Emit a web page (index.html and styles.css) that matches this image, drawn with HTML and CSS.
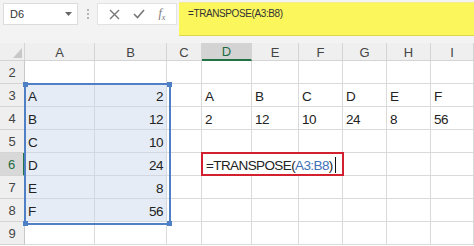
FILE: index.html
```html
<!DOCTYPE html>
<html lang="en">
<head>
    <meta charset="UTF-8">
    <title>TRANSPOSE</title>
    <link rel="stylesheet" href="styles.css">
</head>
<body>

    <!-- barra de formula -->
    <div class="toolbar">
        <div class="namebox">
            <span>D6</span>
            <svg class="caret" width="7" height="4" viewBox="0 0 7 4"><path d="M0 0h7L3.5 4z" fill="#666"/></svg>
        </div>
        <div class="grip"><i></i><i></i><i></i></div>
        <div class="buttons">
            <svg width="11" height="11" viewBox="0 0 11 11"><path d="M1 1l9 9M10 1l-9 9" stroke="#777" stroke-width="1.4"/></svg>
            <svg width="12" height="10" viewBox="0 0 12 10"><path d="M1 5l3.5 3.5L11 1" stroke="#777" stroke-width="1.6" fill="none"/></svg>
            <span class="fx">f<sub>x</sub></span>
        </div>
        <div class="formula">=TRANSPOSE(A3:B8)</div>
    </div>

    <!-- hoja -->
    <div class="sheet">
        <div class="corner"><svg width="9" height="10" viewBox="0 0 9 10"><path d="M9 0v10H0z" fill="#c8c8c8"/></svg></div>
        <div class="colhead">A</div>
        <div class="colhead">B</div>
        <div class="colhead">C</div>
        <div class="colhead active">D</div>
        <div class="colhead">E</div>
        <div class="colhead">F</div>
        <div class="colhead">G</div>
        <div class="colhead">H</div>
        <div class="colhead">I</div>

        <div class="rowhead">2</div>
        <div class="cell"></div><div class="cell"></div><div class="cell"></div><div class="cell"></div><div class="cell"></div><div class="cell"></div><div class="cell"></div><div class="cell"></div><div class="cell"></div>

        <div class="rowhead">3</div>
        <div class="cell sel">A</div><div class="cell sel num">2</div><div class="cell"></div>
        <div class="cell">A</div><div class="cell">B</div><div class="cell">C</div><div class="cell">D</div><div class="cell">E</div><div class="cell">F</div>

        <div class="rowhead">4</div>
        <div class="cell sel">B</div><div class="cell sel num">12</div><div class="cell"></div>
        <div class="cell">2</div><div class="cell">12</div><div class="cell">10</div><div class="cell">24</div><div class="cell">8</div><div class="cell">56</div>

        <div class="rowhead">5</div>
        <div class="cell sel">C</div><div class="cell sel num">10</div><div class="cell"></div>
        <div class="cell"></div><div class="cell"></div><div class="cell"></div><div class="cell"></div><div class="cell"></div><div class="cell"></div>

        <div class="rowhead active">6</div>
        <div class="cell sel">D</div><div class="cell sel num">24</div><div class="cell"></div>
        <div class="cell"></div><div class="cell"></div><div class="cell"></div><div class="cell"></div><div class="cell"></div><div class="cell"></div>

        <div class="rowhead">7</div>
        <div class="cell sel">E</div><div class="cell sel num">8</div><div class="cell"></div>
        <div class="cell"></div><div class="cell"></div><div class="cell"></div><div class="cell"></div><div class="cell"></div><div class="cell"></div>

        <div class="rowhead">8</div>
        <div class="cell sel">F</div><div class="cell sel num">56</div><div class="cell"></div>
        <div class="cell"></div><div class="cell"></div><div class="cell"></div><div class="cell"></div><div class="cell"></div><div class="cell"></div>

        <div class="rowhead">9</div>
        <div class="cell"></div><div class="cell"></div><div class="cell"></div><div class="cell"></div><div class="cell"></div><div class="cell"></div><div class="cell"></div><div class="cell"></div><div class="cell"></div>

        <!-- rango A3:B8 -->
        <div class="range">
            <b class="h tl"></b><b class="h tr"></b><b class="h bl"></b><b class="h br"></b>
        </div>

        <!-- celda en edicion -->
        <div class="editor">=TRANSPOSE(<span class="ref">A3:B8</span>)<span class="cursor"></span></div>
    </div>

</body>
</html>
```

FILE: styles.css
```css
body {
    margin: 0;
    width: 474px;
    height: 246px;
    overflow: hidden;
    background-color: #fff;
    font-family: "Liberation Sans", Arial, sans-serif;
}

.toolbar {
    display: flex;
    align-items: flex-start;
    height: 43px;
    background-color: #f3f3f3;
}

.namebox {
    display: flex;
    align-items: center;
    justify-content: space-between;
    box-sizing: border-box;
    width: 75px;
    height: 22px;
    margin: 3px 0 0 3px;
    padding: 0 5px 0 6px;
    background-color: #fff;
    border: 1px solid #dcdcdc;
    font-size: 11px;
    color: #333;
}

.grip {
    display: flex;
    flex-direction: column;
    gap: 2px;
    margin: 9px 8px 0 9px;
}

.grip i {
    display: block;
    width: 2px;
    height: 2px;
    background-color: #b5b5b5;
}

.buttons {
    display: flex;
    align-items: center;
    justify-content: space-around;
    box-sizing: border-box;
    width: 80px;
    height: 22px;
    margin-top: 3px;
    padding: 0 4px;
    background-color: #fff;
    border: 1px solid #e2e2e2;
}

.fx {
    font-family: "Liberation Serif", serif;
    font-style: italic;
    font-size: 12px;
    color: #777;
}

.fx sub {
    font-size: 8px;
}

.formula {
    flex: 1;
    box-sizing: border-box;
    height: 34px;
    margin: 2px 0 0 2px;
    padding: 5px 0 0 9px;
    background-color: #fbf65c;
    border-top: 1px solid #f3ee8a;
    border-bottom: 1px solid #dcd84a;
    font-size: 10px;
    letter-spacing: -0.4px;
    color: #333;
}

.sheet {
    position: relative;
    display: grid;
    grid-template-columns: 25px 70px 72px 35px 50px 47px 44px 44px 44px 43px;
    grid-template-rows: 18px repeat(8, 23px);
    font-size: 13.5px;
    letter-spacing: -0.5px;
    color: #222;
}

.corner,
.colhead,
.rowhead {
    display: flex;
    align-items: center;
    justify-content: center;
    box-sizing: border-box;
    background-color: #efefef;
    color: #444;
    letter-spacing: 0;
    border-right: 1px solid #d4d4d4;
    border-bottom: 1px solid #d4d4d4;
}

.corner {
    justify-content: flex-end;
    align-items: flex-end;
    padding: 0 2px 2px 0;
}

.colhead {
    font-size: 13px;
    padding-top: 1px;
}

.colhead.active {
    background-color: #d3d3d3;
    color: #1e6b42;
    border-bottom: 2px solid #217346;
}

.rowhead {
    font-size: 13px;
    border-right: 1px solid #c8c8c8;
}

.rowhead.active {
    background-color: #d8d8d8;
    color: #1e6b42;
    border-right: 2px solid #217346;
}

.cell {
    box-sizing: border-box;
    padding: 5px 3px 0 3px;
    border-right: 1px solid #dadada;
    border-bottom: 1px solid #dadada;
    white-space: nowrap;
}

.cell.sel {
    background-color: #e5ecf6;
    border-color: #d2d8e0;
}

.cell.num {
    text-align: right;
}

.range {
    position: absolute;
    left: 24px;
    top: 40px;
    width: 143px;
    height: 138px;
    border: 2px solid #4f7fc5;
    pointer-events: none;
}

.h {
    position: absolute;
    width: 5px;
    height: 5px;
    background-color: #4f7fc5;
}

.tl { left: -3px; top: -3px; }
.tr { right: -3px; top: -3px; }
.bl { left: -3px; bottom: -3px; }
.br { right: -3px; bottom: -3px; }

.editor {
    position: absolute;
    left: 201px;
    top: 109px;
    box-sizing: border-box;
    width: 143px;
    height: 24px;
    padding: 3px 0 0 3px;
    background-color: #fff;
    border: 2px solid #d3202e;
    font-size: 13.5px;
    letter-spacing: -0.6px;
    color: #222;
    white-space: nowrap;
}

.ref {
    color: #3f6fb8;
}

.cursor {
    display: inline-block;
    width: 1px;
    height: 16px;
    margin-left: 2px;
    vertical-align: -3px;
    background-color: #111;
}
```
